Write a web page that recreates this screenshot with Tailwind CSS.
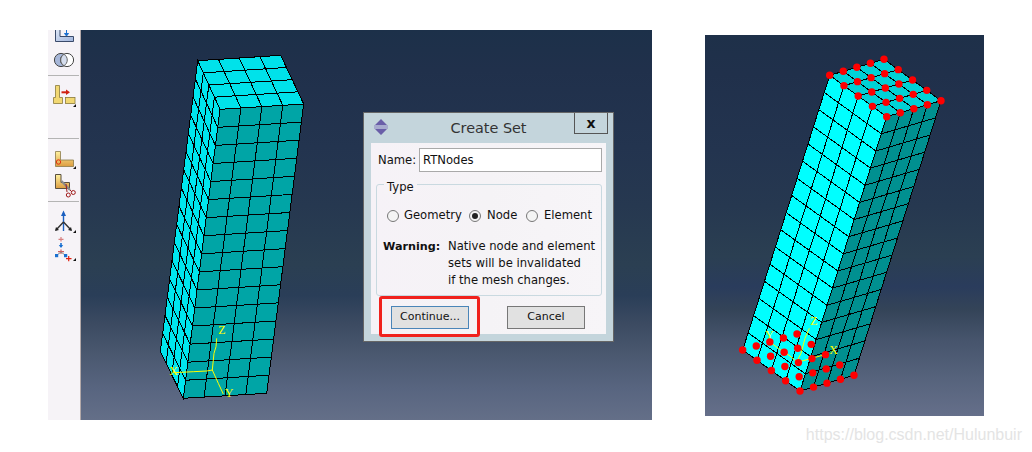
<!DOCTYPE html>
<html lang="en">
  <head>
    <meta charset="utf-8" />
    <title>Create Set</title>
    <script src="https://cdn.jsdelivr.net/npm/@tailwindcss/browser@4"></script>
  </head>
  <body class="bg-white w-[1032px] h-[452px] overflow-hidden font-['DejaVu_Sans',sans-serif]">
    <main class="flex items-start">
      <!-- left figure: toolbar + viewport + dialog -->
      <section class="relative flex ml-[48px] mt-[30px] w-[604px] h-[390px]">
        <aside class="flex flex-col w-[33px] h-[390px] bg-[#f6f3f7] border-r border-[#b3a9a9] overflow-hidden">
          <svg class="block shrink-0" width="33" height="45" viewBox="48 30 33 45">
            <defs>
              <linearGradient id="blueL" x1="0" y1="0" x2="1" y2="1"><stop offset="0" stop-color="#dfe7f6" /><stop offset="1" stop-color="#9fb4dc" /></linearGradient>
              <linearGradient id="yellowL" x1="0" y1="0" x2="0" y2="1"><stop offset="0" stop-color="#fff2a0" /><stop offset="1" stop-color="#dc9c40" /></linearGradient>
            </defs>
            <path d="M55.5 29V41.5H73.5V36.5H60V29Z" fill="url(#blueL)" stroke="#3a4a6a" />
            <path d="M66.5 30V34M64.5 33.5H68.5L66.5 36Z" fill="#1a6fd0" stroke="#1a6fd0" />
            <circle cx="61" cy="60" r="6.6" fill="#a6b6d8" stroke="#444" />
            <circle cx="67" cy="60" r="6.6" fill="#fff" stroke="#444" />
            <path d="M64 54.3A6.6 6.6 0 0 1 64 65.7A6.6 6.6 0 0 1 64 54.3Z" fill="#d5dded" stroke="#666" />
          </svg>
          <div class="h-[1px] w-[31px] bg-[#b4b4b4] shrink-0"></div>
          <div class="h-[1px] shrink-0"></div>
          <svg class="block shrink-0" width="33" height="61" viewBox="48 77 33 61">
            <path d="M55.5 85.5H59.5V97.5H62.5V103.5H53.5V97.5H55.5Z" fill="#f2d873" stroke="#8a7a3a" stroke-width="0.8" />
            <rect x="65.5" y="97.5" width="9.5" height="6" fill="#f2d873" stroke="#8a7a3a" stroke-width="0.8" />
            <path d="M61.5 92.3H66.5" stroke="#d02010" stroke-width="2" />
            <path d="M66 89.5L70 92.3L66 95Z" fill="#d02010" />
            <path d="M76 104V107H73Z" fill="#111" />
          </svg>
          <div class="h-[1px] w-[31px] bg-[#b4b4b4] shrink-0"></div>
          <div class="h-[1px] shrink-0"></div>
          <svg class="block shrink-0" width="33" height="61" viewBox="48 140 33 61">
            <path d="M55.5 151.5H60.5V160H73.5V166.5H55.5Z" fill="url(#yellowL)" stroke="#8a7a4a" stroke-width="0.8" />
            <circle cx="58.5" cy="162" r="2.2" fill="none" stroke="#e03010" />
            <path d="M76 166V169H73Z" fill="#111" />
            <path d="M55.5 174.5H61V182.5H69.5V188.5H55.5Z" fill="url(#yellowL)" stroke="#5a5040" />
            <path d="M61.5 181L70 190" stroke="#8a8a8a" stroke-width="2" />
            <path d="M66 184L67 192M70 190L72 192" stroke="#9a2020" />
            <circle cx="68.3" cy="195" r="2" fill="none" stroke="#a01818" />
            <circle cx="73.3" cy="192.5" r="2" fill="none" stroke="#a01818" />
          </svg>
          <div class="h-[1px] w-[31px] bg-[#b4b4b4] shrink-0"></div>
          <div class="h-[1px] shrink-0"></div>
          <svg class="block shrink-0" width="33" height="70" viewBox="48 203 33 70">
            <path d="M63.5 213V231" stroke="#1a5fc0" stroke-width="1.4" />
            <path d="M63.5 210.5L66 216H61Z" fill="#1a5fc0" />
            <path d="M63.5 222L56 230M63.5 222L71 230" stroke="#333" stroke-width="1.4" />
            <path d="M55 231L56 227L59 230Z M72 231L71 227L68 230Z" fill="#222" />
            <path d="M76 230V233H73Z" fill="#111" />
            <path d="M58.5 239.3H63.5M61 237V241.5" stroke="#d88080" stroke-width="1.2" />
            <path d="M61 243V247" stroke="#1a70d0" stroke-width="1.6" />
            <path d="M58.8 245L61 248L63.2 245Z" fill="#1a70d0" />
            <path d="M58 251.7H64M61 249.5V254" stroke="#d06060" stroke-width="1.2" />
            <path d="M61 252L57 255M61 252L65 255" stroke="#888" />
            <rect x="55" y="254" width="3.2" height="3.2" fill="#1a70d0" />
            <rect x="64" y="254" width="3.2" height="3.2" fill="#1a70d0" />
            <path d="M66 258.7H71.5M68.7 256V261.2" stroke="#e02010" stroke-width="1.2" />
            <path d="M76 258V261H73Z" fill="#111" />
          </svg>
        </aside>

        <div class="w-[571px] h-[390px] bg-[linear-gradient(180deg,#1c3049_0%,#20304b_10%,#23344f_30%,#263850_45%,#2b3f52_60%,#2a3e58_68%,#3b4a61_75%,#4a586f_83%,#586580_92%,#646f88_100%)]">
          <svg id="leftMesh" class="block" width="571" height="390" viewBox="81 30 571 390"></svg>
        </div>

        <!-- dialog window -->
        <div class="absolute left-[315px] top-[82px] w-[251px] h-[230px] bg-[#c4d5dc] border border-[#666] text-[#111] text-[11.6px]">
          <div class="flex h-[30px]">
            <div class="w-[39px] pl-[9px] pt-[6px]">
              <svg width="16" height="16" viewBox="0 0 16 16">
                <path d="M8 0L14 6H2Z M8 16L14 10H2Z" fill="#6a5ea8" />
                <path d="M1 6.5H15V7.5H1Z M1 8.5H15V9.5H1Z" fill="#8a80c0" />
              </svg>
            </div>
            <div class="flex-1 text-center text-[14.4px] leading-[30px] text-[#333]">Create Set</div>
            <div class="w-[34px] h-[21px] mr-[5px] flex items-center justify-center border border-t-0 border-[#555] bg-[#c4d5dc] font-bold text-[14px]">x</div>
          </div>
          <div class="mx-[7px] h-[191px] bg-[linear-gradient(90deg,#f6f2f7_0%,#f5f3f6_50%,#f7f5f8_100%)] pt-[5px]">
            <div class="flex items-center pl-[7px]">
              <span class="w-[41px] pt-[1px]">Name:</span>
              <div class="w-[183px] h-[24px] bg-white border border-[#a9a9a9] pl-[3px] leading-[23px]">RTNodes</div>
            </div>
            <div class="relative ml-[5px] mt-[12px] w-[226px] h-[112px] border border-[#c9d9e0] rounded-[3px] pt-[24px]">
              <span class="absolute left-[7px] -top-[5px] px-[3px] leading-[14px] bg-[#f6f3f7]">Type</span>
              <div class="flex items-center h-[14px] pl-[10px]">
                <span class="w-[12px] h-[12px] rounded-full border border-[#777] bg-[#f4f4f4]"></span>
                <span class="ml-[5px] w-[65px]">Geometry</span>
                <span class="flex items-center justify-center w-[12px] h-[12px] rounded-full border border-[#777] bg-[#f4f4f4]"><span class="w-[6px] h-[6px] rounded-full bg-[#222]"></span></span>
                <span class="ml-[6px] w-[39px]">Node</span>
                <span class="w-[12px] h-[12px] rounded-full border border-[#777] bg-[#f4f4f4]"></span>
                <span class="ml-[6px]">Element</span>
              </div>
              <div class="flex mt-[15px] pl-[6px] leading-[17px]">
                <span class="w-[65px] font-bold text-[11.2px]">Warning:</span>
                <p>Native node and element<br />sets will be invalidated<br />if the mesh changes.</p>
              </div>
            </div>
            <div class="flex ml-[20px] mt-[10px] gap-[38px] text-[11px]">
              <button class="w-[78px] h-[23px] bg-[#e1e1e1] border border-[#4a85b8] text-[#111]">Continue...</button>
              <button class="w-[78px] h-[23px] bg-[#e1e1e1] border border-[#777] text-[#111]">Cancel</button>
            </div>
          </div>
          <!-- red annotation round the Continue button -->
          <div class="absolute left-[15px] top-[183px] w-[101px] h-[41px] border-[3px] border-[#f0211d] rounded-[3px]"></div>
        </div>
      </section>

      <!-- right figure -->
      <section class="flex flex-col ml-[53px] mt-[35px]">
        <div class="w-[279px] h-[381px] bg-[linear-gradient(180deg,#1e3049_0%,#20304b_10%,#23344f_30%,#263850_45%,#2b3f52_58%,#2a3c5c_66%,#344458_72%,#46546c_80%,#56637c_90%,#656f8a_100%)]">
          <svg id="rightMesh" class="block" width="279" height="381" viewBox="705 35 279 381"></svg>
        </div>
        <p class="w-[317px] mt-[11px] text-right text-[16px] leading-[16px] text-[#e4e4e4] font-['Liberation_Sans',sans-serif]">https://blog.csdn.net/Hulunbuir</p>
      </section>
    </main>

    <script>
      const NS = "http://www.w3.org/2000/svg";

      function add(svg, tag, attrs, text) {
        const el = document.createElementNS(NS, tag);
        for (const k in attrs) el.setAttribute(k, attrs[k]);
        if (text) el.textContent = text;
        svg.appendChild(el);
      }

      // quad corners: a b (top edge), d c (bottom edge)
      function at([a, b, c, d], u, v) {
        const x1 = a[0] + (b[0] - a[0]) * u, y1 = a[1] + (b[1] - a[1]) * u;
        const x2 = d[0] + (c[0] - d[0]) * u, y2 = d[1] + (c[1] - d[1]) * u;
        return [x1 + (x2 - x1) * v, y1 + (y2 - y1) * v];
      }

      function face(svg, quad, nu, nv, fill) {
        add(svg, "polygon", { points: quad.map((p) => p.join(",")).join(" "), fill, stroke: "#000", "shape-rendering": "crispEdges" });
        const line = (p, q) => add(svg, "line", { x1: p[0], y1: p[1], x2: q[0], y2: q[1], stroke: "#000", "shape-rendering": "crispEdges" });
        for (let i = 1; i < nu; i++) line(at(quad, i / nu, 0), at(quad, i / nu, 1));
        for (let j = 1; j < nv; j++) line(at(quad, 0, j / nv), at(quad, 1, j / nv));
      }

      function dots(svg, quad) {
        for (let i = 0; i <= 4; i++)
          for (let j = 0; j <= 4; j++) {
            const [cx, cy] = at(quad, i / 4, j / 4);
            add(svg, "circle", { cx, cy, r: 3.7, fill: "#ff0000" });
          }
      }

      function triad(svg, lines, labels) {
        lines.forEach((points) => add(svg, "polyline", { points, fill: "none", stroke: "#ffff00" }));
        labels.forEach(([t, x, y]) =>
          add(svg, "text", { x, y, fill: "#ffff00", "font-size": 12, "font-family": "Liberation Serif, serif", "text-anchor": "middle" }, t)
        );
      }

      const left = document.getElementById("leftMesh");
      face(left, [[197.7, 60.7], [280.7, 55.3], [303.7, 104], [220, 109.3]], 4, 4, "#00e2ea");
      face(left, [[197.7, 60.7], [220, 109.3], [183.3, 398.3], [160.3, 351.7]], 4, 16, "#00e6ee");
      face(left, [[220, 109.3], [303.7, 104], [266.7, 393.3], [183.3, 398.3]], 4, 16, "#00a5a6");
      triad(
        left,
        ["212.3,370 214,353.3 216,346.7 216.7,338.3", "212.3,370 206.7,371 193.3,371.7 173.3,372.7", "212.3,370 218.3,383.3 223.3,394"],
        [["Z", 222, 334], ["X", 173.5, 375], ["Y", 229, 397]]
      );

      const right = document.getElementById("rightMesh");
      const topFace = [[829.7, 75.3], [884, 59.3], [941, 100.7], [886.7, 116.7]];
      const baseFace = [[742.7, 350], [797, 334], [854, 375.3], [800, 391]];
      face(right, topFace, 4, 4, "#00d2d6");
      face(right, [[829.7, 75.3], [886.7, 116.7], [800, 391], [742.7, 350]], 4, 16, "#00ffff");
      face(right, [[886.7, 116.7], [941, 100.7], [854, 375.3], [800, 391]], 4, 16, "#009090");
      triad(
        right,
        ["796.7,361.7 801,353.3 805,338.3 809.3,328.3", "796.7,361.7 803.3,360.7 820,356 828,354", "796.7,361.7 790,356 778.3,348.3 771.7,343.3"],
        [["Z", 814, 325], ["X", 833.5, 354], ["Y", 769.5, 339]]
      );
      dots(right, topFace);
      dots(right, baseFace);
    </script>
  </body>
</html>
